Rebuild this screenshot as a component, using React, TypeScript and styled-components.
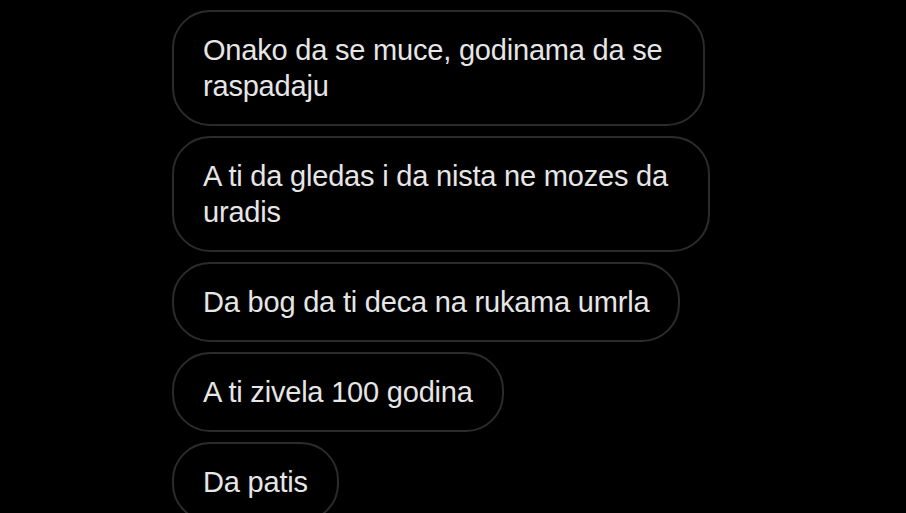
import styled, { createGlobalStyle } from 'styled-components';

const GlobalStyle = createGlobalStyle`
  html, body {
    margin: 0;
    padding: 0;
    background: #000000;
    overflow: hidden;
  }
`;

const messages: string[][] = [
  ['Onako da se muce, godinama da se', 'raspadaju'],
  ['A ti da gledas i da nista ne mozes da', 'uradis'],
  ['Da bog da ti deca na rukama umrla'],
  ['A ti zivela 100 godina'],
  ['Da patis']
];

export default function App() {
  return (
    <>
      <GlobalStyle />
      <Screen>
        <Thread>
          {messages.map((lines) => (
            <Bubble key={lines[0]} $wrapped={lines.length > 1}>
              {lines.map((line) => (
                <Line key={line}>{line}</Line>
              ))}
            </Bubble>
          ))}
        </Thread>
      </Screen>
    </>
  );
}

const Screen = styled.div`
  width: 906px;
  height: 513px;
  background: #000000;
  overflow: hidden;
  box-sizing: border-box;
  padding: 10px 0 0 172px;
`;

const Thread = styled.div`
  display: flex;
  flex-direction: column;
  align-items: flex-start;
  gap: 10px;
`;

const Bubble = styled.div<{ $wrapped: boolean }>`
  box-sizing: border-box;
  width: fit-content;
  border: 2px solid #2b2b2b;
  border-radius: 38px;
  padding: 20px ${(p) => (p.$wrapped ? 40 : 29)}px 20px 29px;
  color: #e6e6e6;
  font-family: 'Liberation Sans', Arial, sans-serif;
  font-size: 29px;
  line-height: 36px;
  letter-spacing: -0.2px;
`;

const Line = styled.div`
  white-space: nowrap;
`;
